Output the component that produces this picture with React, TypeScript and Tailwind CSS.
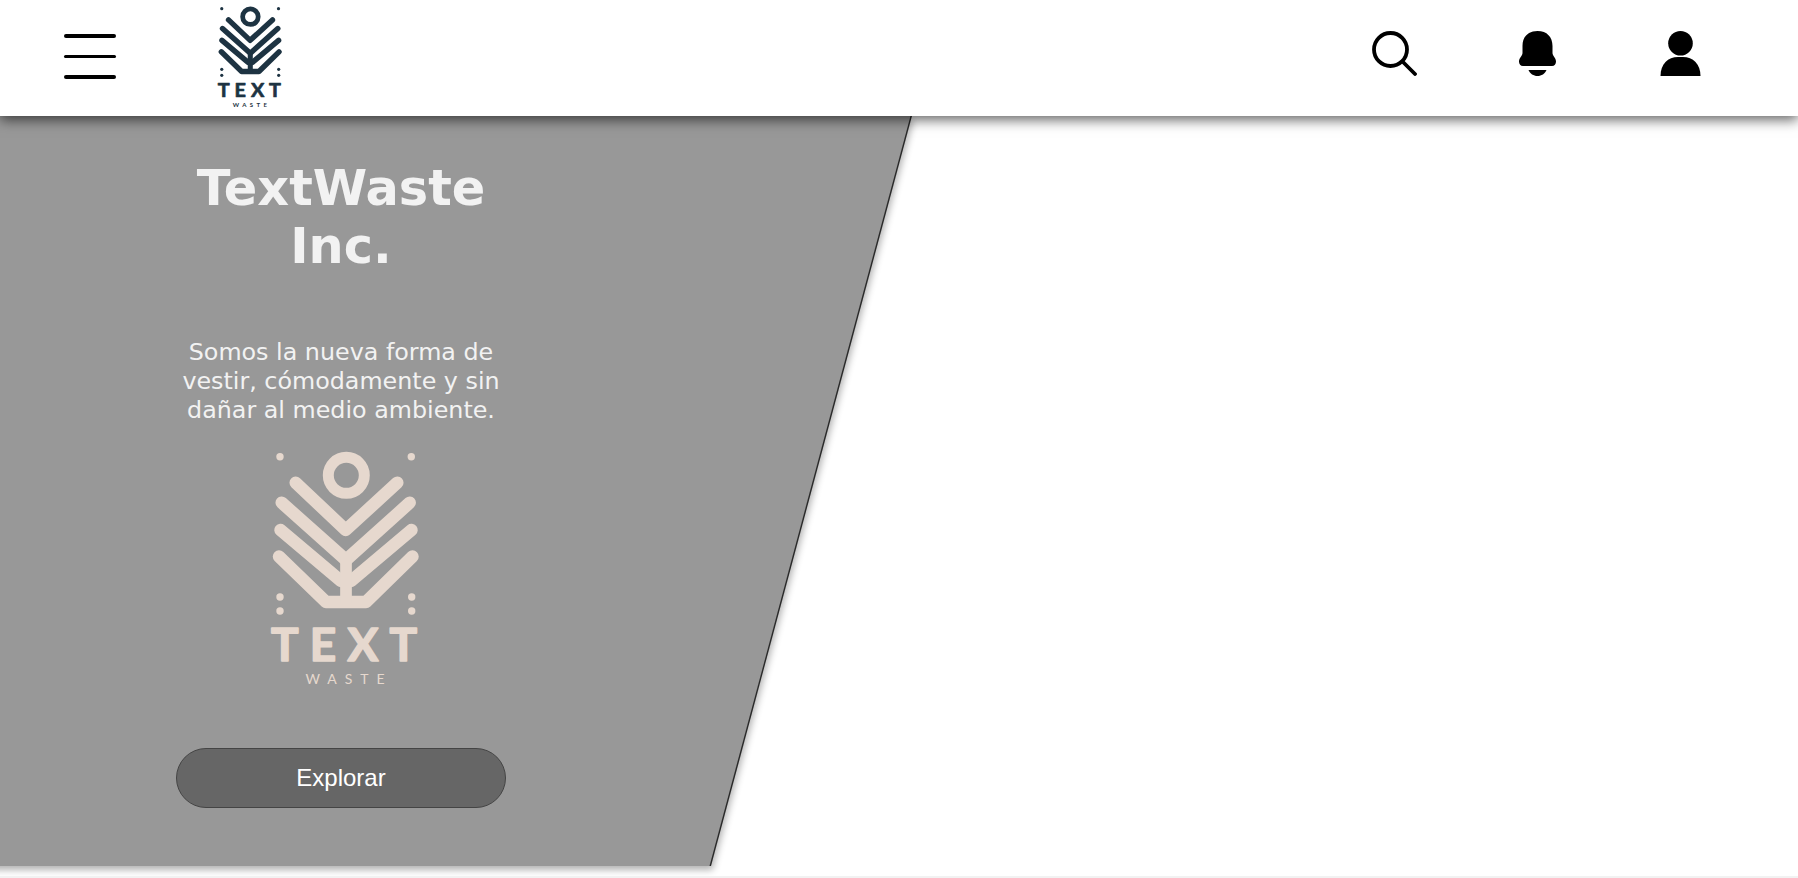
const Logo = ({ color, className, small }: { color: string; className: string; small?: boolean }) => (
    <svg viewBox="30 15 155 245" className={className} fill="none" stroke={color} strokeLinecap="round" strokeLinejoin="round">
        <circle cx="107.3" cy="44.3" r="18" strokeWidth="11" />
        <path strokeWidth="12.500" d="M56.700 51.700 106.700 99 158.300 51.700" />
        <path strokeWidth="12.500" d="M42.700 71.700 107 129 170.700 71.700" />
        <path strokeWidth="12.500" d="M41.500 99 102 150M172.500 99 112 150" />
        <path strokeWidth="12.500" d="M40 125.500 87 171 127 171 173.500 125.500" />
        <path strokeWidth="11.700" strokeLinecap="butt" d="M107 125V172" />
        <g fill={color} stroke="none">
            {[[41, 25.700], [172.300, 25.700], [41, 166], [41, 180], [172.700, 166], [172.700, 180]].map(([cx, cy]) => (
                <circle key={`${cx}-${cy}`} cx={cx} cy={cy} r="3.700" />
            ))}
        </g>
        <text x="32" y="230" textLength="146" fill={color} stroke={color} strokeWidth="1.600" fontSize="46" fontWeight="700" className="font-['Lato',sans-serif]">TEXT</text>
        <text x="66.500" y="253" textLength="79" fill={color} stroke="none" fontSize="14" fontWeight={small ? 700 : 400} className="font-['Lato',sans-serif]">WASTE</text>
    </svg>
)

const App = () => {
    return (
        <div className="h-[878px] w-full overflow-hidden bg-[#f2f2f2] font-['DejaVu_Sans',sans-serif]">
            <div className="h-[876px] bg-white flex flex-col overflow-hidden">
                <header className="relative z-10 h-[116px] shrink-0 bg-white shadow-[0_4px_12px_rgba(0,0,0,0.6)] flex items-center pl-16 pr-[95px]">
                    <div className="-mt-[3px] flex flex-col gap-[17px] w-[52px]">
                        <span className="block h-[3.500px] bg-black rounded-full" />
                        <span className="block h-[3.500px] bg-black rounded-full" />
                        <span className="block h-[3.500px] bg-black rounded-full" />
                    </div>
                    <Logo color="#1d3342" small className="ml-[101px] -mt-[3px] w-[67px] h-[106px]" />
                    <div className="ml-auto flex items-center gap-[98px] -mt-[10px]">
                        <svg viewBox="0 0 45 45" className="w-[45px] h-[45px]" fill="none" stroke="black" strokeLinecap="round">
                            <circle cx="18.500" cy="18.500" r="16.500" strokeWidth="3.800" />
                            <path strokeWidth="3.800" d="M30.500 30.500 43 43" />
                        </svg>
                        <svg viewBox="0 0 45 45" className="w-[45px] h-[45px]" fill="black">
                            <path d="M22.500 0C13 0 7.500 6 7.500 15V22C7.500 25 4 27 4 30.500 4 33 5.500 35 8 35H37C39.500 35 41 33 41 30.500 41 27 37.500 25 37.500 22V15C37.500 6 32 0 22.500 0Z" />
                            <path d="M13.500 39H31.500C30 42.800 26.500 45 22.500 45S15 42.800 13.500 39Z" />
                        </svg>
                        <svg viewBox="0 0 45 45" className="w-[45px] h-[45px]" fill="black">
                            <circle cx="22.500" cy="12.300" r="12.300" />
                            <path d="M2.500 45C2.500 33 10 26 20 26H25C35 26 42.500 33 42.500 45Z" />
                        </svg>
                    </div>
                </header>
                <main className="flex-1 min-h-0 flex items-start">
                    <div className="-ml-[200px] w-[1010px] h-[750px] shrink-0 -skew-x-[15deg] bg-[#989898] shadow-[1.500px_0_0_#2a2a2a,4px_4px_7px_rgba(0,0,0,0.3)]">
                        <div className="skew-x-[15deg] h-full pl-[375px] flex flex-col items-start">
                            <div className="w-[332px] flex flex-col items-center text-center">
                                <h1 className="mt-[43px] text-[49.400px] leading-[58px] font-bold text-[#f2f2f2]">TextWaste<br />Inc.</h1>
                                <p className="mt-[63px] w-[332px] text-[23.800px] leading-[29px] text-[#f2f2f2]">Somos la nueva forma de vestir, cómodamente y sin dañar al medio ambiente.</p>
                                <Logo color="#e6d8ce" className="mt-[21px] ml-[10px] w-[155px] h-[245px]" />
                                <button className="mt-[57px] w-[330px] h-[60px] rounded-[30px] bg-[#666666] border border-[#444444] text-white text-[24px] font-['Liberation_Sans',sans-serif]">Explorar</button>
                            </div>
                        </div>
                    </div>
                </main>
            </div>
        </div>
    )
}

export default App
